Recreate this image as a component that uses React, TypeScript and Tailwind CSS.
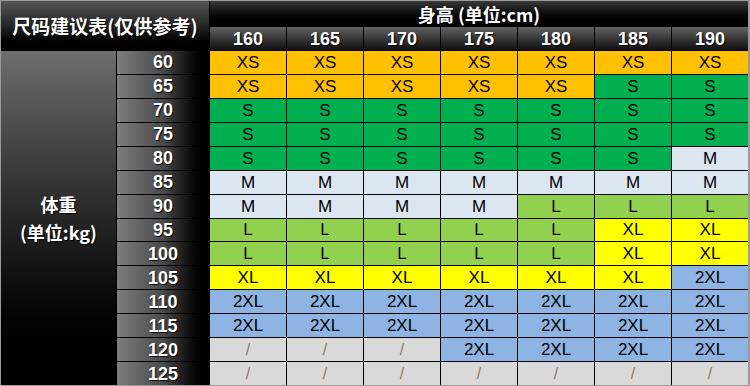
import React from "react";

const heights = ["160", "165", "170", "175", "180", "185", "190"];

const rows: [string, string[]][] = [
  ["60", ["XS", "XS", "XS", "XS", "XS", "XS", "XS"]],
  ["65", ["XS", "XS", "XS", "XS", "XS", "S", "S"]],
  ["70", ["S", "S", "S", "S", "S", "S", "S"]],
  ["75", ["S", "S", "S", "S", "S", "S", "S"]],
  ["80", ["S", "S", "S", "S", "S", "S", "M"]],
  ["85", ["M", "M", "M", "M", "M", "M", "M"]],
  ["90", ["M", "M", "M", "M", "L", "L", "L"]],
  ["95", ["L", "L", "L", "L", "L", "XL", "XL"]],
  ["100", ["L", "L", "L", "L", "L", "XL", "XL"]],
  ["105", ["XL", "XL", "XL", "XL", "XL", "XL", "2XL"]],
  ["110", ["2XL", "2XL", "2XL", "2XL", "2XL", "2XL", "2XL"]],
  ["115", ["2XL", "2XL", "2XL", "2XL", "2XL", "2XL", "2XL"]],
  ["120", ["/", "/", "/", "2XL", "2XL", "2XL", "2XL"]],
  ["125", ["/", "/", "/", "/", "/", "/", "/"]],
];

const bg: Record<string, string> = {
  XS: "bg-[#ffc000]",
  S: "bg-[#00b050]",
  M: "bg-[#dce6f1]",
  L: "bg-[#92d050]",
  XL: "bg-[#ffff00]",
  "2XL": "bg-[#8db4e2]",
  "/": "bg-[#d9d9d9]",
};

const cjk = "font-['Noto_Sans_CJK_SC','Liberation_Sans',sans-serif]";
const arial = "font-['Liberation_Sans',Arial,sans-serif]";
const shadow = "[text-shadow:1px_1px_1px_rgba(0,0,0,0.9)]";

export default function App() {
  return (
    <div className="w-[750px] h-[386px] overflow-hidden bg-black">
      <div className="w-[750px] h-[386px] border-t border-l border-b border-r-2 border-[#9a9a9a] bg-black">
        <div className="grid h-full gap-px grid-cols-[115px_92px_repeat(7,minmax(0,1fr))] grid-rows-[25px_23px_repeat(14,minmax(0,1fr))] bg-black leading-none">
          <div
            className={`col-start-1 col-span-2 row-start-1 row-span-2 flex items-center justify-center bg-gradient-to-b from-[#555555] via-[#262626] to-black text-white font-bold text-[19px] ${cjk} ${shadow}`}
          >
            尺码建议表(仅供参考)
          </div>
          <div
            className={`col-start-3 col-span-7 row-start-1 flex items-center justify-center bg-gradient-to-b from-[#3a3a3a] via-[#0c0c0c] to-black text-white font-bold text-[18px] ${cjk} ${shadow}`}
          >
            身高 (单位:cm)
          </div>
          {heights.map((h) => (
            <div
              key={h}
              className={`row-start-2 flex items-center justify-center bg-gradient-to-b from-[#636363] to-[#111111] text-white font-bold text-[18px] ${arial} ${shadow}`}
            >
              {h}
            </div>
          ))}
          <div
            className={`col-start-1 row-start-3 row-span-14 flex flex-col items-center justify-center bg-gradient-to-b from-[#6e6e6e] to-black text-white font-bold text-[18px] leading-[28px] ${cjk} ${shadow}`}
          >
            <span>体重</span>
            <span>(单位:kg)</span>
          </div>
          {rows.map(([w, sizes]) => (
            <React.Fragment key={w}>
              <div
                className={`col-start-2 flex items-center justify-center bg-gradient-to-r from-[#7e7e7e] via-[#4a4a4a] to-black text-white font-bold text-[18px] ${arial} ${shadow}`}
              >
                {w}
              </div>
              {sizes.map((s, i) => (
                <div
                  key={i}
                  className={`flex items-center justify-center ${bg[s]} ${
                    s === "/" ? "text-[#8a7868] text-[16px] font-light" : "text-black text-[17px]"
                  } ${arial}`}
                >
                  {s}
                </div>
              ))}
            </React.Fragment>
          ))}
        </div>
      </div>
    </div>
  );
}
